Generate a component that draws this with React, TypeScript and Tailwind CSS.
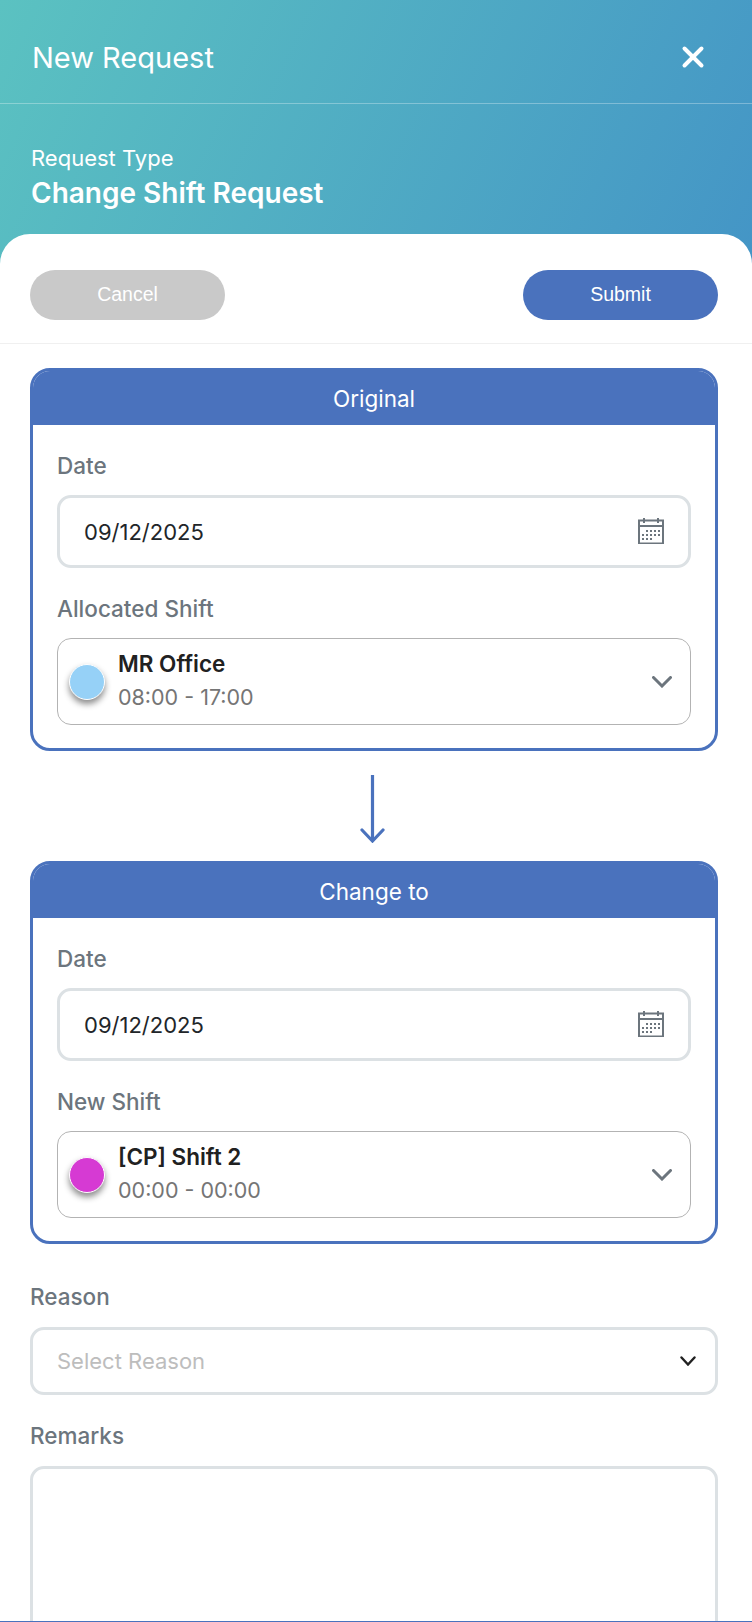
import { X } from "lucide-react";

const font = "font-['Inter','Open_Sans',sans-serif]";

function CalendarIcon() {
  const dots = [
    [9, 13], [13, 13], [17, 13], [21, 13],
    [5, 17], [9, 17], [13, 17], [17, 17], [21, 17],
    [5, 21], [9, 21], [13, 21],
  ];
  return (
    <svg width="26" height="26" viewBox="0 0 26 26" className="-mt-[2px] text-[#6c757d]">
      <rect x="1" y="2.5" width="24" height="23" fill="none" stroke="currentColor" strokeWidth="2" />
      <rect x="1" y="7" width="24" height="2" fill="currentColor" />
      <rect x="5" y="0" width="2" height="5" fill="currentColor" />
      <rect x="19" y="0" width="2" height="5" fill="currentColor" />
      {dots.map(([x, y]) => (
        <rect key={`${x}-${y}`} x={x - 1} y={y - 1} width="2" height="2" fill="currentColor" />
      ))}
    </svg>
  );
}

function Label({ children }: { children: string }) {
  return <div className="text-[22.5px] leading-[26px] font-medium text-[#6c757d]">{children}</div>;
}

function DateField() {
  return (
    <div className="flex h-[73px] items-center justify-between rounded-[14px] border-[3px] border-[#dce1e4] pr-[24px] pl-[24px]">
      <span className="pt-[1px] text-[22px] text-[#212529]">09/12/2025</span>
      <CalendarIcon />
    </div>
  );
}

function ShiftSelect({ color, shadow, name, time }: { color: string; shadow: string; name: string; time: string }) {
  return (
    <div className="flex h-[87px] items-center rounded-[14px] border border-[#b3b3b3] pr-[18px] pl-[11px]">
      <div className={`h-[36px] w-[36px] shrink-0 rounded-full border border-white ${color} ${shadow}`} />
      <div className="mb-[3px] ml-[13px] flex-1">
        <div className="text-[22.5px] leading-[30px] font-semibold text-[#212121]">{name}</div>
        <div className="mt-[3px] text-[21.5px] leading-[30px] text-[#757575]">{time}</div>
      </div>
      <svg width="20" height="12" viewBox="0 0 20 12" fill="none" stroke="#6c757d" strokeWidth="3" strokeLinecap="round">
        <path d="M1.5 1.5L10 10L18.5 1.5" />
      </svg>
    </div>
  );
}

function ShiftCard(props: {
  title: string;
  shiftLabel: string;
  color: string;
  shadow: string;
  name: string;
  time: string;
}) {
  return (
    <div className="overflow-hidden rounded-[20px] border-[3px] border-[#4a72bd]">
      <div className="flex h-[54px] items-center justify-center bg-[#4a72bd] pt-[1px] text-[22.5px] text-white">
        {props.title}
      </div>
      <div className="px-[24px] pt-[28px] pb-[23px]">
        <Label>Date</Label>
        <div className="mt-[16px]">
          <DateField />
        </div>
        <div className="mt-[28px]">
          <Label>{props.shiftLabel}</Label>
        </div>
        <div className="mt-[16px]">
          <ShiftSelect color={props.color} shadow={props.shadow} name={props.name} time={props.time} />
        </div>
      </div>
    </div>
  );
}

export default function App() {
  return (
    <div className={`flex h-[1622px] w-[752px] flex-col overflow-hidden border-b border-[#4a72bd] bg-white ${font}`}>
      <div className="h-[264px] shrink-0 bg-[linear-gradient(115deg,#5bc2c1_0%,#4495c6_100%)] text-white">
        <div className="flex h-[104px] items-center justify-between border-b border-white/30 pt-[11px] pr-[42px] pl-[32px]">
          <span className="pt-[2px] text-[29px]">New Request</span>
          <X size={34} strokeWidth={2.8} />
        </div>
        <div className="pt-[37px] pl-[31px]">
          <div className="text-[22px] leading-[34px]">Request Type</div>
          <div className="text-[28px] leading-[36px] font-semibold">Change Shift Request</div>
        </div>
      </div>

      <div className="-mt-[30px] flex-1 rounded-t-[30px] bg-white">
        <div className="flex h-[110px] items-center justify-between border-b border-[#f0f0f0] pt-[12px] pr-[34px] pl-[30px] font-['Liberation_Sans',sans-serif] text-[19.5px] text-white">
          <button className="h-[50px] w-[195px] rounded-full bg-[#c9c9c9]">Cancel</button>
          <button className="h-[50px] w-[195px] rounded-full bg-[#4a72bd]">Submit</button>
        </div>

        <div className="pt-[24px] pr-[34px] pl-[30px]">
          <ShiftCard
            title="Original"
            shiftLabel="Allocated Shift"
            color="bg-[#96d1f7]"
            shadow="shadow-[0_4px_6px_rgba(0,0,0,0.45)]"
            name="MR Office"
            time="08:00 - 17:00"
          />

          <div className="flex h-[110px] justify-center pt-[24px]">
            <svg width="28" height="68" viewBox="0 0 28 68" fill="none" stroke="#4a72bd" strokeWidth="3.2">
              <path d="M12.5 0V65" />
              <path d="M2 55L12.5 66L23 55" strokeLinecap="round" />
            </svg>
          </div>

          <ShiftCard
            title="Change to"
            shiftLabel="New Shift"
            color="bg-[#d63ad3]"
            shadow="shadow-[0_4px_6px_rgba(0,0,0,0.45)]"
            name="[CP] Shift 2"
            time="00:00 - 00:00"
          />

          <div className="mt-[40px]">
            <Label>Reason</Label>
          </div>
          <div className="mt-[17px] flex h-[68px] items-center justify-between rounded-[14px] border-[3px] border-[#dce1e4] pr-[19px] pl-[24px]">
            <span className="text-[22px] text-[#bdbdbd]">Select Reason</span>
            <svg width="16" height="10" viewBox="0 0 16 10" fill="none" stroke="#212121" strokeWidth="2.4" strokeLinecap="round">
              <path d="M1.5 1.5L8 8.5L14.5 1.5" />
            </svg>
          </div>
          <div className="mt-[28px]">
            <Label>Remarks</Label>
          </div>
          <div className="mt-[17px] h-[240px] rounded-[14px] border-[3px] border-[#dce1e4]" />
        </div>
      </div>
    </div>
  );
}
